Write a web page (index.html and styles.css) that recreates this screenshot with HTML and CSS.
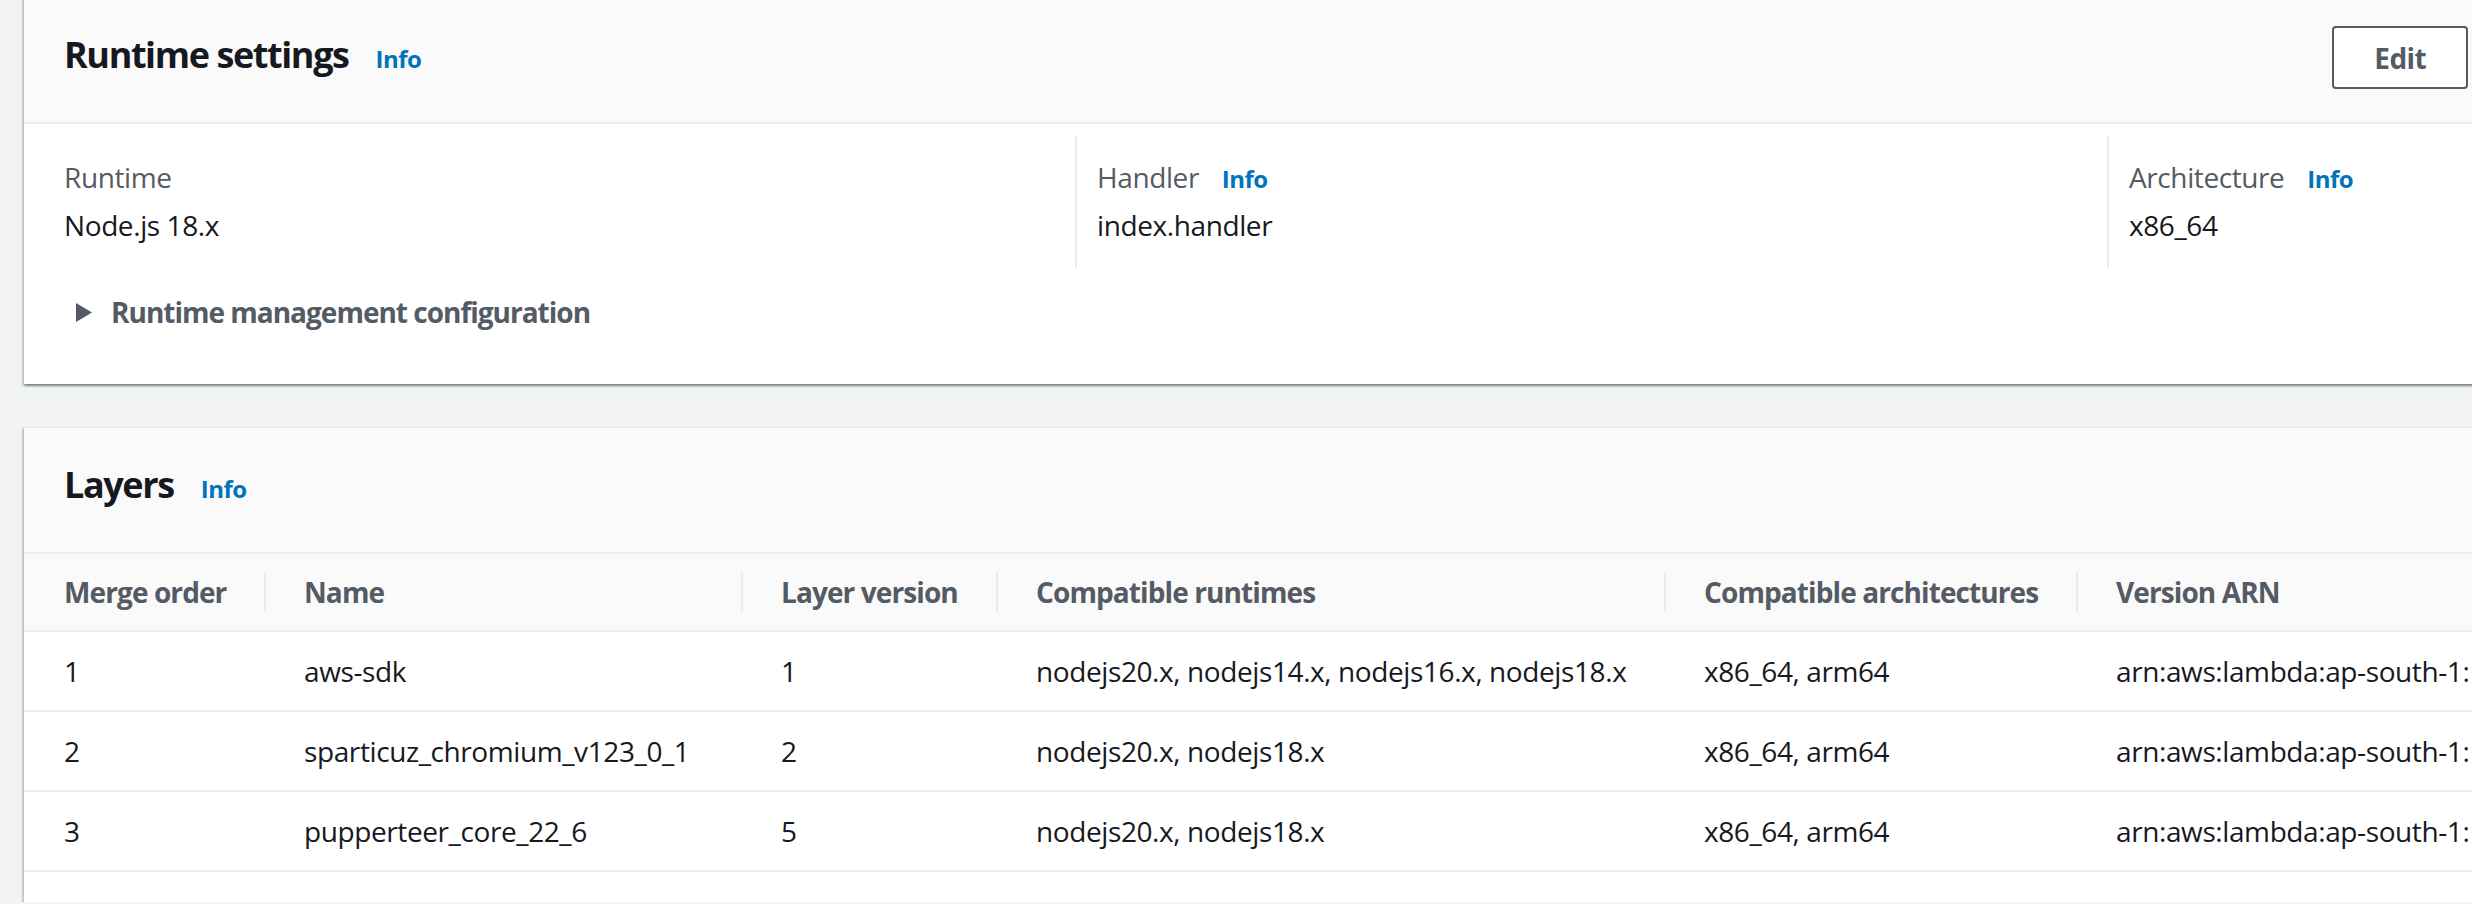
FILE: index.html
```html
<!DOCTYPE html>
<html lang="en">
<head>
<meta charset="utf-8">
<title>Lambda function configuration</title>
<link rel="stylesheet" href="styles.css">
</head>
<body>
<div class="page">
  <section class="card card-first">
    <div class="card-header">
      <div class="title-row">
        <h2 class="title">Runtime settings</h2>
        <a class="info" href="#">Info</a>
      </div>
      <button class="btn" type="button">Edit</button>
    </div>
    <div class="card-body">
      <div class="kv-grid">
        <div class="kv-col">
          <div class="kv-label">Runtime</div>
          <div class="kv-value">Node.js 18.x</div>
        </div>
        <div class="kv-col kv-col-div">
          <div class="kv-label">Handler <a class="info" href="#">Info</a></div>
          <div class="kv-value">index.handler</div>
        </div>
        <div class="kv-col kv-col-div">
          <div class="kv-label">Architecture <a class="info" href="#">Info</a></div>
          <div class="kv-value">x86_64</div>
        </div>
      </div>
      <div class="expander">
        <svg class="caret" width="16" height="19" viewBox="0 0 16 19" aria-hidden="true"><polygon points="0,0 16,9.5 0,19" fill="#545b64"/></svg>
        <span class="expander-text">Runtime management configuration</span>
      </div>
    </div>
  </section>

  <section class="card card-second">
    <div class="card-header">
      <div class="title-row">
        <h2 class="title">Layers</h2>
        <a class="info" href="#">Info</a>
      </div>
    </div>
    <div class="table-wrap">
      <table class="layers">
        <colgroup>
          <col class="w1"><col class="w2"><col class="w3"><col class="w4"><col class="w5"><col class="w6">
        </colgroup>
        <thead>
          <tr>
            <th>Merge order</th>
            <th class="sep">Name</th>
            <th class="sep">Layer version</th>
            <th class="sep">Compatible runtimes</th>
            <th class="sep">Compatible architectures</th>
            <th class="sep">Version ARN</th>
          </tr>
        </thead>
        <tbody>
          <tr>
            <td>1</td>
            <td>aws-sdk</td>
            <td>1</td>
            <td>nodejs20.x, nodejs14.x, nodejs16.x, nodejs18.x</td>
            <td>x86_64, arm64</td>
            <td>arn:aws:lambda:ap-south-1:</td>
          </tr>
          <tr>
            <td>2</td>
            <td>sparticuz_chromium_v123_0_1</td>
            <td>2</td>
            <td>nodejs20.x, nodejs18.x</td>
            <td>x86_64, arm64</td>
            <td>arn:aws:lambda:ap-south-1:</td>
          </tr>
          <tr>
            <td>3</td>
            <td>pupperteer_core_22_6</td>
            <td>5</td>
            <td>nodejs20.x, nodejs18.x</td>
            <td>x86_64, arm64</td>
            <td>arn:aws:lambda:ap-south-1:</td>
          </tr>
        </tbody>
      </table>
    </div>
  </section>
</div>
</body>
</html>
```

FILE: styles.css
```css
html, body {
  margin: 0;
  padding: 0;
  overflow: hidden;
  background: #f2f3f3;
}

body {
  font-family: "Open Sans", "Noto Sans", "Liberation Sans", sans-serif;
  font-size: 28px;
  line-height: 40px;
  color: #16191f;
  letter-spacing: -0.4px;
}

.page {
  padding-left: 24px;
  width: 2484px;
}

.card {
  width: 2484px;
  background: #ffffff;
  border-top: 2px solid #eaeded;
  box-shadow: 0 2px 2px 0 rgba(0, 28, 36, 0.3),
              2px 2px 2px 0 rgba(0, 28, 36, 0.15),
              -2px 2px 2px 0 rgba(0, 28, 36, 0.15);
  overflow: hidden;
}

.card-first {
  margin-top: -4px;
}

.card-second {
  margin-top: 42px;
  padding-bottom: 30px;
}

.card-header {
  height: 124px;
  padding: 0 40px;
  background: #fafafa;
  border-bottom: 2px solid #eaeded;
  display: flex;
  justify-content: space-between;
  align-items: flex-start;
}

.title-row {
  margin-top: 35px;
  display: flex;
  align-items: baseline;
  line-height: 44px;
}

.title {
  margin: 0;
  font-size: 36px;
  font-weight: 700;
  letter-spacing: -1.4px;
  color: #16191f;
}

.info {
  margin-left: 24px;
  font-size: 24px;
  line-height: 24px;
  font-weight: 700;
  letter-spacing: -0.5px;
  color: #0073bb;
  text-decoration: none;
}

.title-row .info {
  margin-left: 27px;
}

.btn {
  margin-top: 28px;
  height: 63px;
  padding: 0 40px;
  background: #ffffff;
  border: 2px solid #545b64;
  border-radius: 4px;
  font-family: inherit;
  font-size: 28px;
  font-weight: 700;
  letter-spacing: -0.6px;
  color: #545b64;
}

.card-body {
  padding: 12px 40px 52px 40px;
}

.kv-grid {
  display: grid;
  grid-template-columns: 1011px 1032px 1fr;
}

.kv-col {
  padding: 21px 0 23px 0;
}

.kv-col-div {
  border-left: 2px solid #eaeded;
  padding-left: 20px;
}

.kv-label {
  height: 40px;
  color: #545b64;
}

.kv-label .info {
  margin-left: 16px;
}

.kv-value {
  margin-top: 8px;
  color: #16191f;
}

.expander {
  margin-top: 24px;
  margin-left: 12px;
  height: 40px;
  display: flex;
  align-items: center;
}

.caret {
  display: block;
  margin-right: 19px;
}

.expander-text {
  font-weight: 700;
  color: #545b64;
  letter-spacing: -1px;
}

.layers {
  width: 2484px;
  table-layout: fixed;
  border-collapse: separate;
  border-spacing: 0;
  white-space: nowrap;
}

.w1 { width: 240px; }
.w2 { width: 477px; }
.w3 { width: 255px; }
.w4 { width: 668px; }
.w5 { width: 412px; }
.w6 { width: 432px; }

.layers th {
  height: 40px;
  text-align: left;
  font-weight: 700;
  color: #545b64;
  letter-spacing: -0.9px;
  background-color: #fafafa;
  padding: 18px 0 18px 40px;
  border-bottom: 2px solid #eaeded;
}

.layers th.sep {
  background-image: linear-gradient(#eaeded, #eaeded);
  background-repeat: no-repeat;
  background-position: left center;
  background-size: 2px 40px;
}

.layers td {
  height: 40px;
  padding: 19px 0 19px 40px;
  border-bottom: 2px solid #eaeded;
  color: #16191f;
}
```
